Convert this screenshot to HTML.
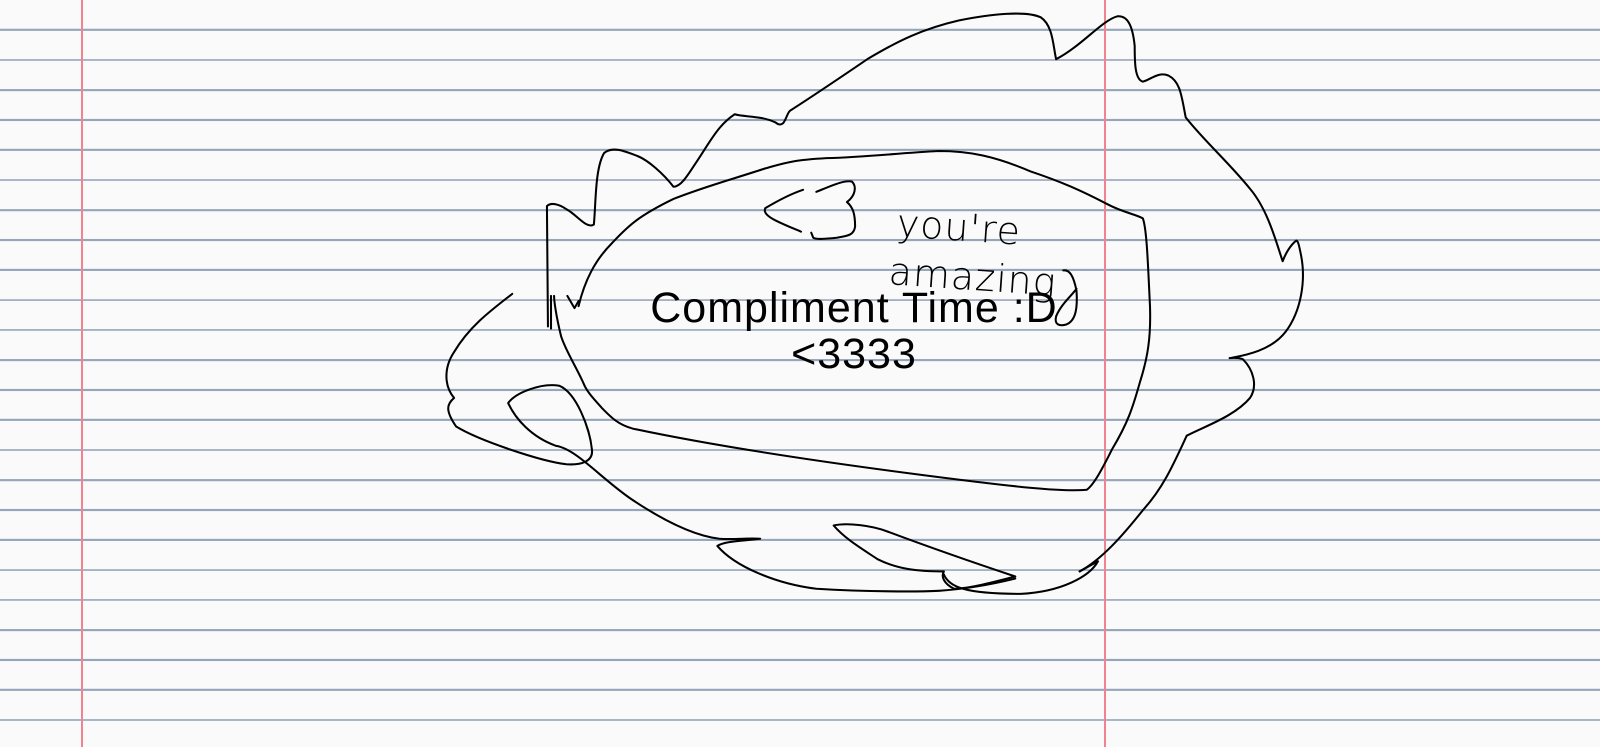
<!DOCTYPE html>
<html><head><meta charset="utf-8"><style>
html,body{margin:0;padding:0;width:1600px;height:747px;overflow:hidden;background:#fafafa}
.bg{position:absolute;left:0;top:0;width:1600px;height:747px;background:repeating-linear-gradient(to bottom,transparent 0,transparent 28px,#95a5ba 28px,#95a5ba 30px);background-position:0 1px}
.v{position:absolute;top:0;width:2px;height:747px;background:#f0838f}
.t{position:absolute;left:0;width:1708px;text-align:center;font-family:"Liberation Sans",sans-serif;font-size:43px;color:#000;line-height:46px}
</style></head><body>
<div class="bg"></div>
<div class="v" style="left:81px"></div>
<div class="v" style="left:1104px"></div>
<div class="t" style="top:285px;letter-spacing:1px">Compliment Time :D<br>&lt;3333</div>
<svg width="1600" height="747" style="position:absolute;left:0;top:0" viewBox="0 0 1600 747">
<g transform="scale(1.0204)" fill="none" stroke="#000" stroke-width="2" stroke-linecap="round" stroke-linejoin="round">
<path d="M502,288 C480,305 460,320 445,345 C435,360 435,378 445,390 C438,396 436,402 447,418 C470,432 530,452 555,455 C570,456 582,452 580,440 C578,420 565,385 548,378 C530,375 505,385 498,395 C505,410 520,428 545,437 C565,440 590,470 620,490 C650,510 680,525 705,528 C720,529 735,527 745,528 C730,530 710,530 703,535 C720,555 760,572 800,577 C850,580 900,580 920,579 C950,577 975,572 995,567"/>
<path d="M817,515 C830,512 855,515 870,521 C910,536 950,550 995,565 C975,570 950,577 935,577 C925,572 922,565 925,560 C900,560 880,558 860,548 C845,538 828,528 817,515 Z"/>
<path d="M925,563 C930,575 945,582 1000,582 C1040,580 1068,565 1076,550 L1058,560"/>
<path d="M1058,560 C1080,548 1100,525 1120,500 C1140,478 1150,455 1163,427 C1180,418 1210,408 1225,390 C1233,378 1228,362 1218,352 C1212,350 1205,351 1205,351 C1215,349 1245,345 1260,325 C1275,305 1280,275 1275,250 C1273,240 1272,235 1270,236 C1265,240 1260,248 1257,256 C1250,235 1242,205 1225,185 C1205,160 1180,138 1162,115 C1158,95 1157,80 1145,74 C1135,70 1128,78 1120,80 C1112,78 1112,60 1112,45 C1110,25 1105,15 1095,16 C1080,20 1060,45 1035,58 C1032,45 1032,25 1020,17 C1005,10 970,14 940,20 C905,28 880,40 850,58 C825,75 800,92 775,108 C770,110 770,128 760,120 C745,113 730,115 720,112 C705,122 698,135 685,155 C675,170 668,183 660,183 C650,170 635,157 625,153 C612,148 600,143 592,150 C583,165 584,200 582,220 C575,225 565,210 555,205 C548,200 540,198 536,202 L537,320"/>
<path d="M556,290 L563,302 L567,295"/>
<path d="M540,290 L540,322"/>
<path d="M567,300 C573,275 583,255 600,238 C615,222 625,212 660,195 C690,183 720,175 750,165 C768,160 775,157 810,155 C850,154 880,150 920,148 C950,148 975,153 1010,168 C1040,178 1060,187 1085,200 C1100,208 1113,210 1120,214 C1124,225 1125,260 1127,300 C1128,330 1125,350 1117,375 C1110,400 1105,415 1090,440 C1080,460 1072,475 1065,480 C1040,482 1000,478 900,465 C800,452 700,437 620,420 C605,416 598,408 590,400 C583,392 575,384 572,376 C565,360 555,345 550,330 C545,310 543,295 543,290"/>
<path d="M800,188 C815,182 828,176 835,178 C840,183 838,192 830,198 C836,203 838,210 838,222 C837,230 832,231 820,233 C810,234 800,235 797,233 L795,228"/>
<path d="M787,186 C775,190 765,195 750,204 C748,208 752,212 760,216 C770,221 778,224 785,227"/>
<path d="M1055,283 C1050,290 1040,298 1035,310 C1033,318 1038,320 1045,318 C1055,314 1056,300 1055,285 C1052,270 1048,264 1042,265"/>
</g>
<g font-family="'DejaVu Sans',sans-serif" font-weight="200" font-size="38" fill="#000">
<text x="896" y="236" transform="rotate(4 896 236)" letter-spacing="1">you're</text>
<text x="888" y="284" transform="rotate(4 888 284)" letter-spacing="1">amazing</text>
</g>
</svg>
</body></html>
